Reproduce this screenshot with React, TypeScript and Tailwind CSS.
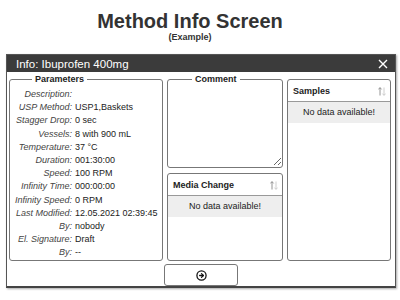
import React from "react";
import { CircleArrowRight } from "lucide-react";

const rows: [string, string][] = [
  ["Description", ""],
  ["USP Method", "USP1,Baskets"],
  ["Stagger Drop", "0 sec"],
  ["Vessels", "8 with 900 mL"],
  ["Temperature", "37 °C"],
  ["Duration", "001:30:00"],
  ["Speed", "100 RPM"],
  ["Infinity Time", "000:00:00"],
  ["Infinity Speed", "0 RPM"],
  ["Last Modified", "12.05.2021 02:39:45"],
  ["By", "nobody"],
  ["El. Signature", "Draft"],
  ["By", "--"],
];

function SortIcon() {
  return (
    <svg width="8" height="9" viewBox="0 0 8 9" className="mr-[1px]">
      <path d="M2 8.5 V0.8 M0.4 2.4 L2 0.6 L3.6 2.4" stroke="#888" strokeWidth="0.9" fill="none" />
      <path d="M6 0.5 V8.2 M4.4 6.6 L6 8.4 L7.6 6.6" stroke="#c8c8c8" strokeWidth="0.9" fill="none" />
    </svg>
  );
}

function TableBox({ title, className }: { title: string; className: string }) {
  return (
    <div className={"border border-[#777] rounded-[3px] bg-white flex flex-col " + className}>
      <div className="h-[22px] border-b border-[#999] pl-[5px] pr-[3px] flex items-center justify-between pt-[2px]">
        <span className="text-[9px] font-bold text-[#222]">{title}</span>
        <SortIcon />
      </div>
      <div className="h-[21px] bg-[#eeeeee] flex items-center justify-center text-[9px] text-[#222]">
        No data available!
      </div>
    </div>
  );
}

export default function App() {
  return (
    <div className="w-[400px] h-[300px] bg-white font-['Liberation_Sans',Arial,sans-serif] text-[#333]">
      <div className="w-[380px] pt-[10px] text-center">
        <div className="text-[20px] font-bold leading-[22px] text-[#333]">Method Info Screen</div>
        <div className="text-[9px] font-bold leading-[10px] text-[#333]">(Example)</div>
      </div>
      <div className="mt-[12px] ml-[6px] w-[390px] h-[234px] border border-[#555] border-b-2 border-b-[#444] shadow-[1px_1px_2px_rgba(0,0,0,0.35)] flex flex-col bg-white">
        <div className="h-[17px] bg-[#3b3b3b] text-white flex items-center justify-between pl-[9px] pr-[7px]">
          <span className="text-[11.5px] leading-[14px]">Info: Ibuprofen 400mg</span>
          <svg width="10" height="10" viewBox="0 0 10 10">
            <path d="M1 1 L9 9 M9 1 L1 9" stroke="white" strokeWidth="1.4" />
          </svg>
        </div>
        <div className="flex gap-[4px] pl-[2px] pr-[3px] pt-[2px]">
          <fieldset className="w-[154px] h-[187px] border border-[#777] rounded-[3px] pl-[2px] pt-[4px]">
            <legend className="ml-[20px] px-[3px] text-[9px] leading-[10px] font-bold text-[#222]">Parameters</legend>
            <div className="grid grid-cols-[60px_1fr] gap-x-[3px] text-[9px] leading-[13.2px] text-[#222]">
              {rows.map(([k, v], i) => (
                <React.Fragment key={i}>
                  <div className="text-right italic whitespace-nowrap text-[#444]">{k}:</div>
                  <div className="whitespace-nowrap">{v}</div>
                </React.Fragment>
              ))}
            </div>
          </fieldset>
          <div className="w-[116px] flex flex-col gap-[5px]">
            <fieldset className="h-[94px] border border-[#777] rounded-[3px] flex flex-col">
              <legend className="ml-[24px] px-[3px] text-[9px] leading-[10px] font-bold text-[#222]">Comment</legend>
              <textarea className="w-full h-[82px] border-0 outline-none bg-transparent text-[9px]" />
            </fieldset>
            <TableBox title="Media Change" className="h-[88px]" />
          </div>
          <TableBox title="Samples" className="w-[104px] h-[182px] mt-[5px]" />
        </div>
        <div className="mt-[3px] ml-[157px]">
          <button className="w-[74px] h-[22px] border border-[#777] rounded-[3px] bg-white flex items-center justify-center">
            <CircleArrowRight size={11} strokeWidth={2.8} color="#111" />
          </button>
        </div>
      </div>
    </div>
  );
}
